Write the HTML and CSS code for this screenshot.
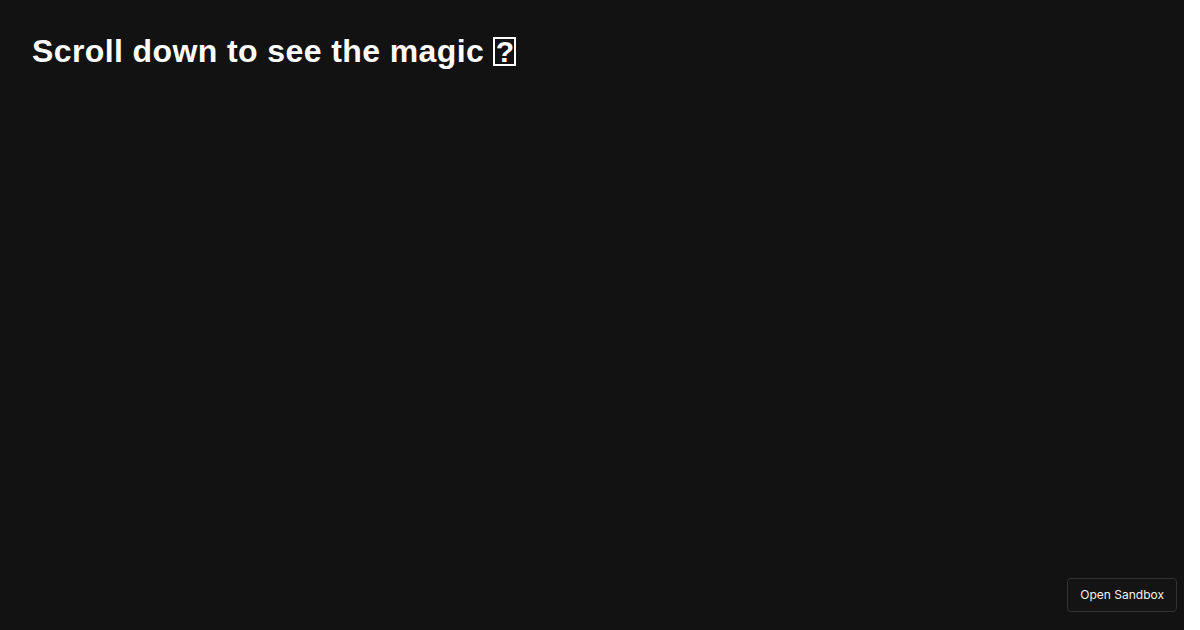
FILE: index.html
```html
<!DOCTYPE html>
<html lang="en">
<head>
    <meta charset="UTF-8">
    <meta name="viewport" content="width=device-width, initial-scale=1.0">
    <title>Scroll Magic</title>
    <link rel="stylesheet" href="styles.css">
</head>
<body>

<main class="page">
    <!-- Intro heading, the emoji shows as a missing-glyph box -->
    <section class="intro">
        <h1 class="intro-title">Scroll down to see the magic <span class="intro-tofu">?</span></h1>
    </section>
</main>

<a class="sandbox-button" href="#">Open Sandbox</a>

</body>
</html>
```

FILE: styles.css
```css
/* Dark page with a big intro heading */
html {
    margin: 0;
    padding: 0;
    background: #ffffff;
}
body {
    margin: 0 16px 0 0;
    padding: 0;
    min-height: 100vh;
    background: #121212;
    font-family: "Liberation Sans", Arial, sans-serif;
    color: #ffffff;
}
.intro {
    padding: 32px 32px 0;
}
.intro-title {
    margin: 0;
    font-size: 32px;
    font-weight: bold;
    line-height: 1.2;
    letter-spacing: 0.4px;
}
.intro-tofu {
    display: inline-block;
    box-sizing: border-box;
    width: 23px;
    height: 29px;
    border: 2px solid #ffffff;
    font-size: 30px;
    line-height: 25px;
    text-align: center;
    letter-spacing: 0;
    vertical-align: 0;
}
.sandbox-button {
    position: fixed;
    right: 23px;
    bottom: 18px;
    padding: 0 12px;
    height: 34px;
    line-height: 32px;
    box-sizing: border-box;
    border: 1px solid #333333;
    border-radius: 4px;
    background: #141414;
    color: #f2f2f2;
    font-family: Inter, "Liberation Sans", sans-serif;
    font-size: 12px;
    text-decoration: none;
}
```
